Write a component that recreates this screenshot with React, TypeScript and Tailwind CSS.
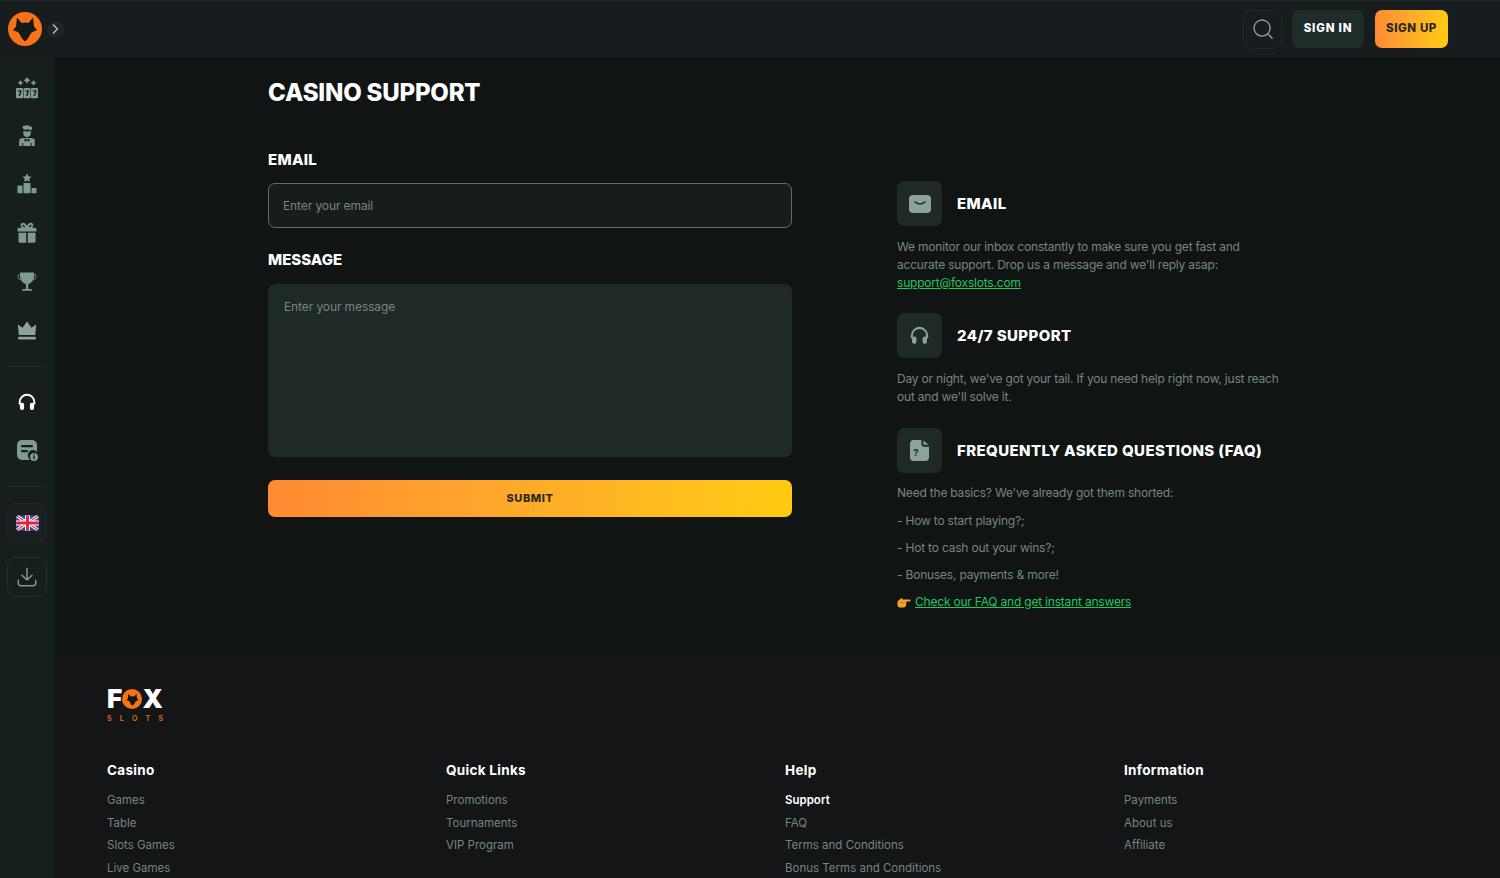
import React from "react";

const Fox = ({ c = "#15191a" }: { c?: string }) => (
  <path fill={c} d="M9 5.500 L13.500 11 Q17 10 20.500 11 L25 5.500 L26 14.500 L29 18 L23.500 20.500 L19.500 27 L17 29.500 L14.500 27 L10.500 20.500 L5 18 L8 14.500 Z" />
);

const Slots = () => (
  <svg viewBox="0 0 24 24" className="w-[24px] h-[24px]" fill="#7f9a92">
    <path d="M12 1l1.300 2 2.200 1.300-2.200 1.300L12 7.800l-1.300-2.200L8.500 4.300l2.200-1.300zM5.500 4l1 1.700 1.800 1.100-1.800 1.100-1 1.900-1-1.900-1.800-1.100 1.800-1.100zM18.500 4l1 1.700 1.800 1.100-1.800 1.100-1 1.900-1-1.900-1.800-1.100 1.800-1.100z" />
    <path fillRule="evenodd" d="M2 12h5.300a1 1 0 0 1 1 1v8.300a1 1 0 0 1-1 1H2a1 1 0 0 1-1-1V13a1 1 0 0 1 1-1zm.9 2.200v1.400h2.200l-1.600 4.500h1.500l1.500-4.700v-1.200zM9.800 12h4.400a1 1 0 0 1 1 1v8.300a1 1 0 0 1-1 1H9.800a1 1 0 0 1-1-1V13a1 1 0 0 1 1-1zm.5 2.200v1.400h2.200l-1.600 4.500h1.500l1.500-4.700v-1.200zM16.700 12H22a1 1 0 0 1 1 1v8.300a1 1 0 0 1-1 1h-5.300a1 1 0 0 1-1-1V13a1 1 0 0 1 1-1zm1.200 2.200v1.400h2.200l-1.600 4.500H20l1.500-4.700v-1.200z" />
  </svg>
);
const Dealer = () => (
  <svg viewBox="0 0 24 24" className="w-[24px] h-[24px]">
    <g transform="translate(0 -1)">
      <path fill="#7f9a92" d="M7.500 2.500C9.500 1 15 1 16.800 3.200c.5 1 .3 2.200-.3 3-2.500-1.200-4.800-.3-7-.4C8.500 5.500 7.300 4 7.500 2.500z" />
      <path fill="#7f9a92" d="M8.300 7c2.500.6 5 .6 7.500 0v2.500c0 2-1.600 3.500-3.800 3.500S8.300 11.500 8.300 9.500z" />
      <path fill="#7f9a92" d="M4.300 15.500c.6-.7 2-1.300 4.200-1.500h7c2.200.2 3.600.8 4.200 1.500V22h-3v-3h-1v3H8.200v-3h-1v3h-3z" />
      <path fill="#171e1e" d="M9.500 14.500l2.500 1.300 2.500-1.300v3.200L12 16.500l-2.500 1.200z" />
    </g>
  </svg>
);
const Podium = () => (
  <svg viewBox="0 0 24 24" className="w-[24px] h-[24px]" fill="#7f9a92">
    <g transform="translate(0 -2)">
      <path d="M12 2.500l1.400 2.700 3.100.5-2.200 2.100.5 3-2.800-1.400-2.800 1.400.5-3-2.200-2.100 3.100-.5z" />
      <rect x="8.500" y="12" width="7" height="10.200" rx=".5" />
      <rect x="2.500" y="14.500" width="5" height="7.700" rx=".5" />
      <rect x="16.500" y="17" width="5" height="5.200" rx=".5" />
    </g>
  </svg>
);
const Gift = () => (
  <svg viewBox="0 0 24 24" className="w-[24px] h-[24px]" fill="#7f9a92">
    <path fillRule="evenodd" d="M7 2c1.800-.7 3.800.4 5 2.800C13.200 2.400 15.200 1.300 17 2c1.900.8 1.700 3.500-.2 4.700H20a1.500 1.500 0 0 1 1.500 1.500v2.300h-19V8.200A1.500 1.500 0 0 1 4 6.700h3.200C5.300 5.500 5.100 2.800 7 2zm.8 1.800c-.8.500-.2 2.200 2.400 2.800-.5-1.700-1.500-3.200-2.400-2.800zm8.400 0c-.9-.4-1.900 1.100-2.400 2.800 2.600-.6 3.200-2.300 2.400-2.800z" />
    <path d="M3.500 11.800h7.700v10H5A1.500 1.500 0 0 1 3.500 20.300zM12.800 11.800h7.700v8.500a1.500 1.500 0 0 1-1.500 1.500h-6.200z" />
  </svg>
);
const Trophy = () => (
  <svg viewBox="0 0 24 24" className="w-[24px] h-[24px]" fill="#7f9a92">
    <path d="M6 2.500h12c.8 0 1.300.5 1.300 1.300 0 4.700-1.500 9-6 10.300v4.900h2.400c1 0 1.500.5 1.500 1.800H7c0-1.300.5-1.800 1.500-1.800h2.400v-4.900c-4.500-1.300-6-5.600-6-10.300 0-.8.300-1.300 1.100-1.300z" />
    <path fill="none" stroke="#7f9a92" strokeWidth="1.200" d="M4.800 5H3.200c-.3 2.300.5 4 2.600 5M19.200 5h1.600c.3 2.300-.5 4-2.600 5" opacity=".65" />
  </svg>
);
const Crown = () => (
  <svg viewBox="0 0 24 24" className="w-[24px] h-[24px]" fill="#8aa39b">
    <path d="M2.800 6.500l4.700 3.300L12 3.500l4.500 6.300 4.700-3.300-1 10.500H3.800z" />
    <rect x="3" y="18.700" width="18" height="2.800" rx="1.200" />
  </svg>
);
const Headset = ({ c = "#ffffff", s = 20 }: { c?: string; s?: number }) => (
  <svg viewBox="0 0 24 24" width={s} height={s} fill="none">
    <path d="M3.300 15v-3a8.700 8.700 0 0 1 17.400 0v3" stroke={c} strokeWidth="2.400" />
    <rect x="3.500" y="13" width="5" height="8.500" rx="2.300" fill={c} />
    <rect x="15.500" y="13" width="5" height="8.500" rx="2.300" fill={c} />
  </svg>
);
const Ticket = () => (
  <svg viewBox="0 0 24 24" className="w-[24px] h-[24px]">
    <path fill="#7f9a92" d="M7 2h10a5 5 0 0 1 5 5v7a5 5 0 0 0-8 6.500l.5 1.500H7a5 5 0 0 1-5-5V7a5 5 0 0 1 5-5z" />
    <rect x="6" y="7" width="12" height="2.200" rx="1" fill="#171e1e" />
    <rect x="6" y="12" width="7" height="2.200" rx="1" fill="#171e1e" />
    <circle cx="19" cy="19" r="4" fill="#7f9a92" />
    <rect x="18.300" y="18" width="1.400" height="3.200" fill="#171e1e" />
    <rect x="18.300" y="16.200" width="1.400" height="1.200" fill="#171e1e" />
  </svg>
);
const Flag = () => (
  <svg viewBox="0 0 24 16" className="w-[23px] h-[16px] rounded-[4px]">
    <rect width="24" height="16" fill="#2f4f9e" />
    <path d="M0 0l24 16M24 0L0 16" stroke="#fff" strokeWidth="3.200" />
    <path d="M0 0l24 16M24 0L0 16" stroke="#e0203f" strokeWidth="1.100" />
    <path d="M12 0v16M0 8h24" stroke="#fff" strokeWidth="5" />
    <path d="M12 0v16M0 8h24" stroke="#e0203f" strokeWidth="3" />
  </svg>
);
const Download = () => (
  <svg viewBox="0 0 24 24" className="w-[22px] h-[22px]" fill="none" stroke="#7f9a92" strokeWidth="1.600" strokeLinecap="round" strokeLinejoin="round">
    <path d="M12 2.500V15M6.500 10l5.500 5.300L17.500 10" />
    <path d="M2.500 15.500v3.500a2.500 2.500 0 0 0 2.500 2.500h14a2.500 2.500 0 0 0 2.500-2.500v-3.500" />
  </svg>
);

const sidebarTop = [Slots, Dealer, Podium, Gift, Trophy, Crown];

const IconBox = ({ children }: { children: React.ReactNode }) => (
  <div className="w-[45px] h-[45px] rounded-[7px] bg-[#1e2928] flex items-center justify-center shrink-0">{children}</div>
);

const H = ({ children }: { children: React.ReactNode }) => (
  <h3 className="text-[15px] leading-[20px] font-extrabold text-white tracking-[0.4px]">{children}</h3>
);

const cols = [
  { t: "Casino", l: ["Games", "Table", "Slots Games", "Live Games"] },
  { t: "Quick Links", l: ["Promotions", "Tournaments", "VIP Program"] },
  { t: "Help", l: ["Support", "FAQ", "Terms and Conditions", "Bonus Terms and Conditions"] },
  { t: "Information", l: ["Payments", "About us", "Affiliate"] },
];

export default function App() {
  return (
    <div className="h-screen overflow-hidden flex flex-col bg-[#101514] font-[Inter,sans-serif] text-[#73877f]">
      <header className="h-[57px] shrink-0 bg-[#171d1e] flex items-center pl-[8px] pr-[52px] border-t border-[#202828]">
        <svg viewBox="0 0 34 34" className="w-[34px] h-[34px]">
          <circle cx="17" cy="17" r="17" fill="#f97316" />
          <Fox />
        </svg>
        <div className="ml-[5px] w-[17px] h-[17px] rounded-full bg-[#1e2627] flex items-center justify-center">
          <svg viewBox="0 0 10 10" className="w-[12px] h-[12px]" fill="none" stroke="#b4c0bc" strokeWidth="1.100"><path d="M2.500 1.200L6.200 5 2.500 8.800" /></svg>
        </div>
        <div className="ml-auto flex items-center">
          <button className="w-[39px] h-[39px] rounded-[9px] border border-[#1f2827] flex items-center justify-center">
            <svg viewBox="0 0 24 24" className="w-[22px] h-[22px]" fill="none" stroke="#8a9f98" strokeWidth="1.500" strokeLinecap="round"><circle cx="11" cy="11" r="8.800" /><path d="M18 18l4 4" /></svg>
          </button>
          <button className="ml-[10px] w-[72px] h-[38px] rounded-[7px] bg-[#1f2c2a] text-white text-[11.500px] font-extrabold tracking-[0.8px]">SIGN IN</button>
          <button className="ml-[11px] w-[73px] h-[38px] rounded-[7px] bg-gradient-to-r from-[#ff8a33] to-[#ffcb10] text-[#2a2a20] text-[11.500px] font-extrabold tracking-[0.6px]">SIGN UP</button>
        </div>
      </header>
      <div className="flex flex-1 min-h-0">
        <aside className="w-[55px] shrink-0 bg-[#171e1e] flex flex-col items-center pt-[7px] pr-px">
          {sidebarTop.map((I, i) => (
            <div key={i} className="h-[48.400px] w-full flex items-center justify-center"><I /></div>
          ))}
          <div className="mt-[12px] w-[38px] h-px bg-[#252d2d]" />
          <div className="mt-[10px] h-[48.500px] w-full flex items-center justify-center"><Headset /></div>
          <div className="h-[48.500px] w-full flex items-center justify-center"><Ticket /></div>
          <div className="mt-[12px] w-[38px] h-px bg-[#252d2d]" />
          <div className="mt-[16px] w-[40px] h-[40px] rounded-[9px] border border-[#1f2827] bg-[#1a2021] flex items-center justify-center"><Flag /></div>
          <div className="mt-[14px] w-[40px] h-[40px] rounded-[9px] border border-[#242c2c] flex items-center justify-center"><Download /></div>
        </aside>
        <div className="flex-1 min-w-0 flex flex-col">
          <main className="h-[598px] shrink-0 pl-[213px] flex">
            <section className="w-[524px] shrink-0">
              <h1 className="mt-[22px] text-[24px] leading-[28px] font-extrabold text-white tracking-[-0.2px]">CASINO SUPPORT</h1>
              <label className="block mt-[43px] text-[15px] leading-[20px] font-extrabold text-white tracking-[0.3px]">EMAIL</label>
              <input placeholder="Enter your email" className="mt-[13px] block w-full h-[45px] rounded-[7px] bg-[#171d1d] border border-[#616d6a] px-[14px] text-[12px] tracking-[-0.1px] placeholder:text-[#73877f] outline-none" />
              <label className="block mt-[22px] text-[15px] leading-[20px] font-extrabold text-white">MESSAGE</label>
              <textarea placeholder="Enter your message" className="mt-[14px] block w-full h-[173px] rounded-[7px] bg-[#1e2928] px-[16px] py-[15px] text-[12px] tracking-[-0.1px] leading-[16px] placeholder:text-[#73877f] outline-none resize-none" />
              <button className="mt-[23px] w-full h-[37px] rounded-[7px] bg-gradient-to-r from-[#ff8a33] to-[#ffcb10] text-[#2a2a20] text-[11px] font-extrabold tracking-[0.6px]">SUBMIT</button>
            </section>
            <section className="ml-[105px] w-[392px] pt-[124px] text-[12px] leading-[18px] tracking-[-0.2px]">
              <div className="flex items-center gap-[15px]">
                <IconBox>
                  <svg viewBox="0 0 22 18" className="w-[22px] h-[18px]">
                    <rect width="22" height="18" rx="4" fill="#8aa39b" />
                    <path d="M6 7q5 4 10 0" stroke="#1e2928" strokeWidth="1.500" fill="none" strokeLinecap="round" />
                  </svg>
                </IconBox>
                <H>EMAIL</H>
              </div>
              <p className="mt-[12px]">We monitor our inbox constantly to make sure you get fast and accurate support. Drop us a message and we'll reply asap:<br /><a className="text-[#22c55e] underline">support@foxslots.com</a></p>
              <div className="mt-[21px] flex items-center gap-[15px]">
                <IconBox><Headset c="#8aa39b" s={21} /></IconBox>
                <H>24/7 SUPPORT</H>
              </div>
              <p className="mt-[12px]">Day or night, we've got your tail. If you need help right now, just reach out and we'll solve it.</p>
              <div className="mt-[22px] flex items-center gap-[15px]">
                <IconBox>
                  <svg viewBox="0 0 20 22" className="w-[19px] h-[21px]">
                    <path fill="#8aa39b" d="M4 0h8v4a3 3 0 0 0 3 3h5v11a4 4 0 0 1-4 4H4a4 4 0 0 1-4-4V4a4 4 0 0 1 4-4z" />
                    <path fill="#8aa39b" d="M14 .5L19.500 5H15a1 1 0 0 1-1-1z" />
                    <text x="3.500" y="17" fontSize="10" fontWeight="700" fill="#1e2928" fontFamily="Inter, sans-serif">?</text>
                  </svg>
                </IconBox>
                <H>FREQUENTLY ASKED QUESTIONS (FAQ)</H>
              </div>
              <p className="mt-[11px]">Need the basics? We've already got them shorted:</p>
              <p className="mt-[10px]">- How to start playing?;</p>
              <p className="mt-[9px]">- Hot to cash out your wins?;</p>
              <p className="mt-[9px]">- Bonuses, payments &amp; more!</p>
              <p className="mt-[9px]">
                <a className="text-[#22c55e] underline inline-flex items-center gap-[4px]">
                  <svg viewBox="0 0 14 12" className="w-[14px] h-[12px]">
                    <path fill="#f5a524" d="M.5 5.500L4.500 2 6 3.500h7q1.200 1 0 2H9.500l-.4 3.800q-.4 2.200-2.600 2.200H3Q.5 11.500.5 8.500z" />
                    <path fill="#c9761a" d="M3 6h5v1H3z" />
                  </svg>
                  Check our FAQ and get instant answers
                </a>
              </p>
            </section>
          </main>
          <footer className="flex-1 bg-[#131516] pl-[52px] pt-[32px] overflow-hidden">
            <div className="w-[56px] leading-none">
              <div className="flex items-center justify-between text-white font-black text-[26px] leading-[24px] h-[24px]">
                <span>F</span>
                <span className="w-[20px] h-[20px] rounded-full bg-[#f97316] -mx-[1px] shrink-0 flex items-center justify-center">
                  <svg viewBox="0 0 34 34" className="w-[17px] h-[17px]"><Fox c="#131516" /></svg>
                </span>
                <span>X</span>
              </div>
              <div className="mt-[3px] flex justify-between text-[#e0701c] text-[7px] leading-[9px] font-semibold"><span>S</span><span>L</span><span>O</span><span>T</span><span>S</span></div>
            </div>
            <div className="grid grid-cols-[339px_339px_339px_339px] mt-[38px]">
              {cols.map((c) => (
                <div key={c.t}>
                  <h4 className="text-[13.500px] leading-[18px] font-bold text-white tracking-[0.3px]">{c.t}</h4>
                  <ul className="mt-[10px]">
                    {c.l.map((x) => (
                      <li key={x} className={"text-[11.500px] h-[22.500px] leading-[22.500px] " + (x === "Support" ? "text-white font-semibold" : "text-[#73877f]")}>{x}</li>
                    ))}
                  </ul>
                </div>
              ))}
            </div>
          </footer>
        </div>
      </div>
    </div>
  );
}
